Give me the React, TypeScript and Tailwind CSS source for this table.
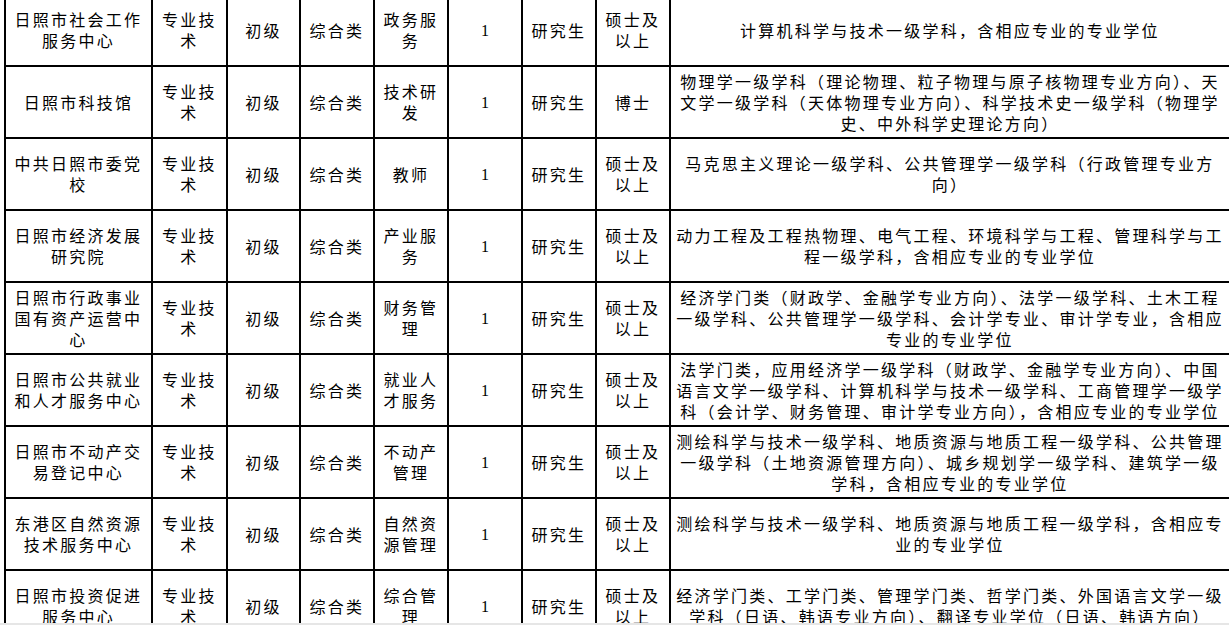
const rows: string[][][] = [
  [
    ["日照市社会工作", "服务中心"],
    ["专业技", "术"],
    ["初级"],
    ["综合类"],
    ["政务服", "务"],
    ["1"],
    ["研究生"],
    ["硕士及", "以上"],
    ["计算机科学与技术一级学科，含相应专业的专业学位"],
  ],
  [
    ["日照市科技馆"],
    ["专业技", "术"],
    ["初级"],
    ["综合类"],
    ["技术研", "发"],
    ["1"],
    ["研究生"],
    ["博士"],
    [
      "物理学一级学科（理论物理、粒子物理与原子核物理专业方向）、天",
      "文学一级学科（天体物理专业方向）、科学技术史一级学科（物理学",
      "史、中外科学史理论方向）",
    ],
  ],
  [
    ["中共日照市委党", "校"],
    ["专业技", "术"],
    ["初级"],
    ["综合类"],
    ["教师"],
    ["1"],
    ["研究生"],
    ["硕士及", "以上"],
    ["马克思主义理论一级学科、公共管理学一级学科（行政管理专业方", "向）"],
  ],
  [
    ["日照市经济发展", "研究院"],
    ["专业技", "术"],
    ["初级"],
    ["综合类"],
    ["产业服", "务"],
    ["1"],
    ["研究生"],
    ["硕士及", "以上"],
    ["动力工程及工程热物理、电气工程、环境科学与工程、管理科学与工", "程一级学科，含相应专业的专业学位"],
  ],
  [
    ["日照市行政事业", "国有资产运营中", "心"],
    ["专业技", "术"],
    ["初级"],
    ["综合类"],
    ["财务管", "理"],
    ["1"],
    ["研究生"],
    ["硕士及", "以上"],
    [
      "经济学门类（财政学、金融学专业方向）、法学一级学科、土木工程",
      "一级学科、公共管理学一级学科、会计学专业、审计学专业，含相应",
      "专业的专业学位",
    ],
  ],
  [
    ["日照市公共就业", "和人才服务中心"],
    ["专业技", "术"],
    ["初级"],
    ["综合类"],
    ["就业人", "才服务"],
    ["1"],
    ["研究生"],
    ["硕士及", "以上"],
    [
      "法学门类，应用经济学一级学科（财政学、金融学专业方向）、中国",
      "语言文学一级学科、计算机科学与技术一级学科、工商管理学一级学",
      "科（会计学、财务管理、审计学专业方向），含相应专业的专业学位",
    ],
  ],
  [
    ["日照市不动产交", "易登记中心"],
    ["专业技", "术"],
    ["初级"],
    ["综合类"],
    ["不动产", "管理"],
    ["1"],
    ["研究生"],
    ["硕士及", "以上"],
    [
      "测绘科学与技术一级学科、地质资源与地质工程一级学科、公共管理",
      "一级学科（土地资源管理方向）、城乡规划学一级学科、建筑学一级",
      "学科，含相应专业的专业学位",
    ],
  ],
  [
    ["东港区自然资源", "技术服务中心"],
    ["专业技", "术"],
    ["初级"],
    ["综合类"],
    ["自然资", "源管理"],
    ["1"],
    ["研究生"],
    ["硕士及", "以上"],
    ["测绘科学与技术一级学科、地质资源与地质工程一级学科，含相应专", "业的专业学位"],
  ],
  [
    ["日照市投资促进", "服务中心"],
    ["专业技", "术"],
    ["初级"],
    ["综合类"],
    ["综合管", "理"],
    ["1"],
    ["研究生"],
    ["硕士及", "以上"],
    [
      "经济学门类、工学门类、管理学门类、哲学门类、外国语言文学一级",
      "学科（日语、韩语专业方向）、翻译专业学位（日语、韩语方向）",
    ],
  ],
];

// border-to-border widths, from the left rule at x=4
const widths = [147, 75, 73, 74, 74, 74, 74, 74, 560];
const total = widths.reduce((a, b) => a + b, 0);

export default function App() {
  return (
    <div className="bg-white w-[1229px] h-[625px] overflow-hidden">
      <div className="h-[623px] overflow-hidden pl-[4px]">
        <table
          className="-mt-[7px] border-collapse table-fixed text-black text-[16px] leading-[21px] tracking-[2.25px]"
          style={{ width: total, fontFamily: '"Noto Sans CJK SC", "Noto Sans", sans-serif' }}
        >
          <colgroup>
            {widths.map((w, i) => (
              <col key={i} style={{ width: w }} />
            ))}
          </colgroup>
          <tbody>
            {rows.map((row, r) => (
              <tr key={r} className="h-[72px]">
                {row.map((cell, c) => (
                  <td
                    key={c}
                    className={
                      c === 5
                        ? "border-2 border-black text-center align-middle p-0 font-['Liberation_Serif',serif] tracking-normal"
                        : "border-2 border-black text-center align-middle p-0"
                    }
                  >
                    {cell.map((line, k) => (
                      <div key={k} className="whitespace-nowrap">
                        {line}
                      </div>
                    ))}
                  </td>
                ))}
              </tr>
            ))}
          </tbody>
        </table>
      </div>
      <div className="h-[2px] bg-[#e6e6e6]" />
    </div>
  );
}
